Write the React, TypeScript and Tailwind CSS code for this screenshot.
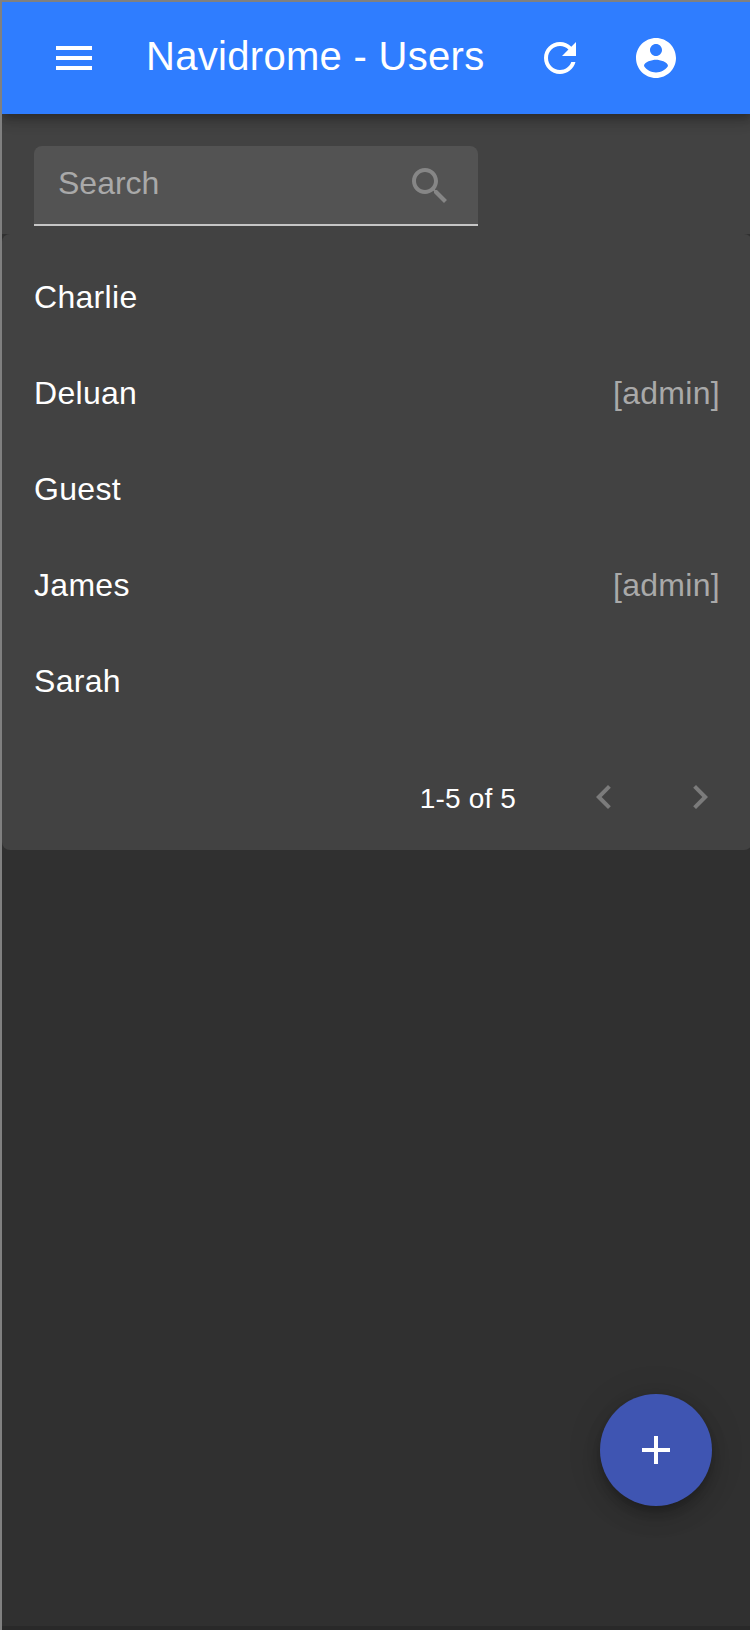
import React from "react";

const users = [
  { name: "Charlie", admin: false },
  { name: "Deluan", admin: true },
  { name: "Guest", admin: false },
  { name: "James", admin: true },
  { name: "Sarah", admin: false },
];

function Icon({ d }: { d: string }) {
  return (
    <svg viewBox="0 0 24 24" className="size-12 shrink-0 fill-current" aria-hidden="true">
      <path d={d} />
    </svg>
  );
}

const MENU = "M3 18h18v-2H3v2zm0-5h18v-2H3v2zm0-7v2h18V6H3z";
const REFRESH =
  "M17.65 6.35C16.2 4.9 14.21 4 12 4c-4.42 0-7.99 3.58-7.99 8s3.57 8 7.99 8c3.73 0 6.84-2.55 7.73-6h-2.08c-.82 2.33-3.04 4-5.65 4-3.31 0-6-2.69-6-6s2.69-6 6-6c1.66 0 3.14.69 4.22 1.78L13 11h7V4l-2.35 2.35z";
const ACCOUNT =
  "M12 2C6.48 2 2 6.48 2 12s4.48 10 10 10 10-4.48 10-10S17.52 2 12 2zm0 3c1.66 0 3 1.34 3 3s-1.34 3-3 3-3-1.34-3-3 1.34-3 3-3zm0 14.2c-2.5 0-4.71-1.28-6-3.22.03-1.99 4-3.08 6-3.08 1.99 0 5.97 1.09 6 3.08-1.29 1.94-3.5 3.22-6 3.22z";
const SEARCH =
  "M15.5 14h-.79l-.28-.27C15.41 12.59 16 11.11 16 9.5 16 5.91 13.09 3 9.5 3S3 5.91 3 9.5 5.91 16 9.5 16c1.61 0 3.09-.59 4.23-1.57l.27.28v.79l5 4.99L20.49 19l-4.99-5zm-6 0C7.01 14 5 11.99 5 9.5S7.01 5 9.5 5 14 7.01 14 9.5 11.99 14 9.5 14z";
const LEFT = "M15.41 7.41L14 6l-6 6 6 6 1.41-1.41L10.83 12z";
const RIGHT = "M10 6L8.59 7.41 13.17 12l-4.58 4.59L10 18l6-6z";
const ADD = "M19 13h-6v6h-2v-6H5v-2h6V5h2v6h6v2z";

export default function App() {
  return (
    <div className="h-[1630px] w-[750px] overflow-hidden border-t-2 border-l-2 border-[#808080] bg-[#303030] font-['Liberation_Sans',Arial,sans-serif] text-white">
      <div className="relative flex h-[1628px] w-[750px] flex-col">
        <header className="z-10 flex h-28 shrink-0 items-center bg-[#2f7dff] pl-12 shadow-[0_4px_8px_-2px_rgba(0,0,0,0.2),0_8px_10px_0_rgba(0,0,0,0.14),0_2px_20px_0_rgba(0,0,0,0.12)]">
          <button aria-label="Menu" className="flex">
            <Icon d={MENU} />
          </button>
          <h1 className="mb-1 ml-12 w-[390px] text-[40px] leading-[64px] tracking-[0.3px] whitespace-nowrap">
            Navidrome - Users
          </h1>
          <button aria-label="Refresh" className="flex">
            <Icon d={REFRESH} />
          </button>
          <button aria-label="Profile" className="ml-12 flex">
            <Icon d={ACCOUNT} />
          </button>
        </header>

        <div className="h-[124px] shrink-0 bg-[#424242] px-8 pt-8">
          <div className="flex h-20 w-[444px] items-center justify-between rounded-t-lg border-b-2 border-[#c6c6c6] bg-[#535353] pr-6 pl-6">
            <span className="mb-[5px] text-[32px] leading-[38px] text-[#a9a9a9]">Search</span>
            <span className="mt-0.5 flex text-[#868686]">
              <Icon d={SEARCH} />
            </span>
          </div>
        </div>

        <main className="-mt-1 flex shrink-0 flex-col bg-[#303030]">
          <section className="rounded-lg bg-[#424242]">
            <ul className="py-4">
              {users.map((user) => (
                <li
                  key={user.name}
                  className="flex h-24 items-center justify-between px-8 pb-0.5 text-[32px] leading-[48px] tracking-[0.3px]"
                >
                  <span>{user.name}</span>
                  {user.admin && <span className="text-[#a9a9a9]">[admin]</span>}
                </li>
              ))}
            </ul>
            <div className="flex h-[104px] items-center justify-end pr-7 pb-0.5">
              <span className="mt-1 mr-16 text-[28px] leading-10 tracking-[0.15px]">1-5 of 5</span>
              <button aria-label="Previous page" className="flex text-[#7b7b7b]">
                <Icon d={LEFT} />
              </button>
              <button aria-label="Next page" className="ml-12 flex text-[#7b7b7b]">
                <Icon d={RIGHT} />
              </button>
            </div>
          </section>
        </main>

        <div className="mt-auto h-1 shrink-0 bg-[#292929]" />

        <button
          aria-label="Create"
          className="absolute right-10 bottom-[124px] flex size-28 items-center justify-center rounded-full bg-[#3f55b2] shadow-[0_6px_10px_-2px_rgba(0,0,0,0.2),0_12px_20px_0_rgba(0,0,0,0.14),0_2px_36px_0_rgba(0,0,0,0.12)]"
        >
          <Icon d={ADD} />
        </button>
      </div>
    </div>
  );
}
